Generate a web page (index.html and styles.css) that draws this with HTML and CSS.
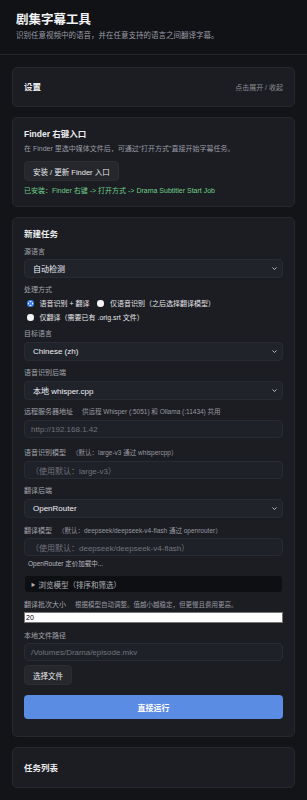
FILE: index.html
```html
<!DOCTYPE html>
<html lang="zh">
<head>
<meta charset="utf-8">
<link rel="stylesheet" href="styles.css">
</head>
<body>
<header class="top">
  <h1 class="title">剧集字幕工具</h1>
  <p class="subtitle">识别任意视频中的语音，并在任意支持的语言之间翻译字幕。</p>
</header>
<main class="main">
  <section class="card card-settings">
    <h2 class="card-title">设置</h2>
    <span class="toggle-hint">点击展开 / 收起</span>
  </section>

  <section class="card">
    <h2 class="card-title">Finder 右键入口</h2>
    <p class="desc">在 Finder 里选中媒体文件后，可通过“打开方式”直接开始字幕任务。</p>
    <button class="btn btn-finder">安装 / 更新 Finder 入口</button>
    <p class="ok">已安装：Finder 右键 -&gt; 打开方式 -&gt; Drama Subtitler Start Job</p>
  </section>

  <section class="card card-task">
    <h2 class="card-title">新建任务</h2>

    <div class="field f-src">
      <label class="label">源语言</label>
      <div class="select"><span>自动检测</span><svg class="chev" viewBox="0 0 10 6"><path d="M1 1l4 4 4-4" fill="none" stroke="currentColor" stroke-width="1.8"/></svg></div>
    </div>

    <div class="field f-mode">
      <label class="label">处理方式</label>
      <div class="radios">
        <span class="radio"><i class="dot on"></i>语音识别 + 翻译</span>
        <span class="radio"><i class="dot"></i>仅语音识别（之后选择翻译模型）</span>
        <span class="radio"><i class="dot"></i>仅翻译（需要已有 .orig.srt 文件）</span>
      </div>
    </div>

    <div class="field f-target">
      <label class="label">目标语言</label>
      <div class="select"><span>Chinese (zh)</span><svg class="chev" viewBox="0 0 10 6"><path d="M1 1l4 4 4-4" fill="none" stroke="currentColor" stroke-width="1.8"/></svg></div>
    </div>

    <div class="field">
      <label class="label">语音识别后端</label>
      <div class="select"><span>本地 whisper.cpp</span><svg class="chev" viewBox="0 0 10 6"><path d="M1 1l4 4 4-4" fill="none" stroke="currentColor" stroke-width="1.8"/></svg></div>
    </div>

    <div class="field">
      <label class="label">远程服务器地址<span class="hint hint-wide">供远程 Whisper (:5051) 和 Ollama (:11434) 共用</span></label>
      <div class="input placeholder">http://192.168.1.42</div>
    </div>

    <div class="field f-wide">
      <label class="label">语音识别模型<span class="hint">（默认：large-v3 通过 whispercpp）</span></label>
      <div class="input placeholder">（使用默认：large-v3）</div>
    </div>

    <div class="field">
      <label class="label">翻译后端</label>
      <div class="select"><span>OpenRouter</span><svg class="chev" viewBox="0 0 10 6"><path d="M1 1l4 4 4-4" fill="none" stroke="currentColor" stroke-width="1.8"/></svg></div>
    </div>

    <div class="field f-8">
      <label class="label label-tight">翻译模型<span class="hint">（默认：deepseek/deepseek-v4-flash 通过 openrouter）</span></label>
      <div class="input placeholder">（使用默认：deepseek/deepseek-v4-flash）</div>
      <p class="loading">OpenRouter 定价加载中...</p>
      <div class="details"><span class="tri">▶</span>浏览模型（排序和筛选）</div>
    </div>

    <div class="field f-8">
      <label class="label label-tight">翻译批次大小<span class="hint hint-wide">根据模型自动调整。值越小越稳定，但更慢且费用更高。</span></label>
      <div class="num">20</div>
    </div>

    <div class="field f-8">
      <label class="label label-tight">本地文件路径</label>
      <div class="input placeholder">/Volumes/Drama/episode.mkv</div>
      <button class="btn btn-file">选择文件</button>
    </div>

    <button class="run">直接运行</button>
  </section>

  <section class="card card-tasks">
    <h2 class="card-title">任务列表</h2>
  </section>
</main>
</body>
</html>
```

FILE: styles.css
```css
* { box-sizing: border-box; }
html, body { margin: 0; padding: 0; }
body {
  background: #131418;
  color: #e6e7ea;
  font-family: "Liberation Sans", "Noto Sans CJK SC", sans-serif;
  font-size: 8px;
}
.top {
  background: #111216;
  border-bottom: 1px solid #25262c;
  padding: 12px 16px 13px;
}
.title {
  margin: 0;
  font-size: 12.5px;
  line-height: 16px;
  font-weight: 700;
  color: #f2f3f5;
}
.subtitle {
  margin: 3px 0 0;
  font-size: 7.5px;
  line-height: 10px;
  color: #9a9ca4;
}
.main {
  padding: 12px;
  display: flex;
  flex-direction: column;
  gap: 10px;
}
.card {
  background: #1c1d22;
  border: 1px solid #27282e;
  border-radius: 5px;
  padding: 10px 11px 10px;
}
.card-settings {
  display: flex;
  justify-content: space-between;
  align-items: center;
  height: 40px;
  padding: 0 11px;
}
.card-title {
  margin: 0;
  font-size: 8.5px;
  line-height: 12px;
  font-weight: 700;
  color: #eceef1;
}
.toggle-hint {
  font-size: 7px;
  color: #8d8f97;
}
.desc {
  margin: 4px 0 0;
  font-size: 7px;
  line-height: 10px;
  color: #9a9ca4;
}
.btn {
  display: block;
  background: #25272d;
  border: 1px solid #2c2e34;
  border-radius: 4px;
  color: #e8e9ec;
  font-family: inherit;
  font-size: 7.5px;
  height: 20px;
  padding: 0 8px;
}
.btn-finder { margin-top: 7px; }
.ok {
  margin: 5px 0 0;
  font-size: 7px;
  line-height: 10px;
  color: #6fcf8a;
}
.card-task { padding-bottom: 17px; }
.field { margin-top: 7px; }
.f-src { margin-top: 7px; }
.f-src .label { margin-bottom: 2px; }
.f-mode { margin-top: 7px; }
.f-target { margin-top: 6px; }
.f-wide { margin-top: 10px; }
.f-8 { margin-top: 8px; }
.label {
  display: block;
  font-size: 7px;
  line-height: 10px;
  color: #a2a4ab;
  margin-bottom: 3px;
}
.label-tight { margin-bottom: 2px; }
.hint {
  font-size: 6.5px;
  margin-left: 6px;
  color: #9799a0;
}
.hint-wide { margin-left: 9px; }
.select, .input {
  height: 19px;
  border: 1px solid #292b32;
  border-radius: 4px;
  background: #21232b;
  display: flex;
  align-items: center;
  padding: 0 8px;
  font-size: 8px;
  color: #eef0f3;
}
.select { justify-content: space-between; padding-right: 5px; }
.input { height: 18px; padding: 0 6px; }
.chev { width: 5px; height: 3px; color: #c9cbd0; }
.input.placeholder { color: #70737c; background: #1f2128; }
.radios {
  margin-top: 2px;
  display: flex;
  flex-wrap: wrap;
  column-gap: 8px;
  row-gap: 3px;
  padding-left: 3px;
  font-size: 7px;
  color: #e3e4e8;
}
.radio { display: inline-flex; align-items: center; gap: 6px; line-height: 11px; }
.dot {
  width: 6.5px; height: 6.5px; border-radius: 50%;
  background: #f4f4f6;
  display: inline-block;
}
.dot.on {
  background: radial-gradient(circle, #3b7ded 0 1.5px, #ffffff 1.7px 2.1px, #3b7ded 2.3px);
}
.loading {
  margin: 3px 0 0 4px;
  font-size: 6.5px;
  line-height: 10px;
  color: #b8bac0;
}
.details {
  margin: 7px 1px 0;
  height: 16px;
  background: #0e0f13;
  border-radius: 3px;
  display: flex;
  align-items: center;
  padding: 0 6px;
  font-size: 7.5px;
  color: #b0b2b8;
}
.tri { font-size: 4.5px; margin-right: 3px; }
.num {
  height: 11px;
  background: #fff;
  border: 1px solid #767676;
  color: #000;
  font-size: 7px;
  line-height: 9px;
  padding: 0 1px;
}
.btn-file { margin-top: 4px; }
.run {
  display: block;
  width: 100%;
  margin-top: 10px;
  height: 24px;
  border: none;
  border-radius: 4px;
  background: #5b8ce3;
  color: #fff;
  font-family: inherit;
  font-size: 8px;
  font-weight: 700;
}
.card-tasks { height: 41px; padding: 0 11px; display: flex; align-items: center; }
```
